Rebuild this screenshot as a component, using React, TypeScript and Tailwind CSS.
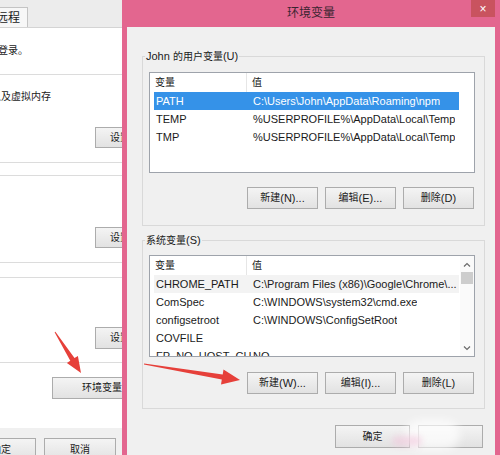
import React from "react";

const F = "font-['Liberation_Sans','Noto_Sans_CJK_SC',sans-serif]";

function Z({ children }: { children: React.ReactNode }) {
  return <span className="text-[10px]">{children}</span>;
}

function Btn({ children, className = "" }: { children?: React.ReactNode; className?: string }) {
  return (
    <div
      className={
        "flex items-center shrink-0 border border-[#acacac] bg-linear-to-b from-[#f4f4f4] to-[#e2e2e2] text-[#1a1a1a] whitespace-nowrap " +
        className
      }
    >
      {children}
    </div>
  );
}

type Row = { name: string; value: string; sel?: boolean; hover?: boolean };

function ListBox({ rows, scroll, className = "" }: { rows: Row[]; scroll?: boolean; className?: string }) {
  return (
    <div className={"bg-white border border-[#9ea3ab] flex overflow-hidden shrink-0 " + className}>
      <div className="flex-1 flex flex-col overflow-hidden">
        <div className="h-[19px] flex shrink-0 text-[#1a1a1a]">
          <div className="w-[97px] pl-[5px] border-r border-[#e6e6e6] flex items-center">
            <Z>变量</Z>
          </div>
          <div className="pl-[5px] flex items-center">
            <Z>值</Z>
          </div>
        </div>
        {rows.map((r, i) => (
          <div
            key={i}
            className={
              "ml-[4px] w-[305px] h-[18px] shrink-0 flex items-center whitespace-nowrap " +
              (r.sel ? "bg-[#3592e8] text-white" : r.hover ? "bg-[#f3f3f3] text-[#1a1a1a]" : "text-[#1a1a1a]")
            }
          >
            <div className="w-[97px] pl-[2px] overflow-hidden">{r.name}</div>
            <div className="pl-[2px] overflow-hidden">{r.value}</div>
          </div>
        ))}
      </div>
      {scroll && (
        <div className="w-[14px] bg-[#fafafa] flex flex-col shrink-0">
          <div className="h-[16px] flex items-center justify-center">
            <svg width="8" height="5" viewBox="0 0 8 5">
              <path d="M1 4.5 L4 1.5 L7 4.5" fill="none" stroke="#6a6a6a" strokeWidth="1.2" />
            </svg>
          </div>
          <div className="h-[12px] mx-[1px] bg-[#cdcdcd]" />
          <div className="flex-1" />
          <div className="h-[16px] flex items-center justify-center">
            <svg width="8" height="5" viewBox="0 0 8 5">
              <path d="M1 0.5 L4 3.5 L7 0.5" fill="none" stroke="#6a6a6a" strokeWidth="1.2" />
            </svg>
          </div>
        </div>
      )}
    </div>
  );
}

function arrowPts(x1: number, y1: number, x2: number, y2: number, hl: number, hw: number, sw: number, tw: number) {
  const dx = x2 - x1;
  const dy = y2 - y1;
  const L = Math.hypot(dx, dy);
  const ux = dx / L;
  const uy = dy / L;
  const nx = -uy;
  const ny = ux;
  const bx = x2 - ux * hl;
  const by = y2 - uy * hl;
  const pts = [
    [x1 + (nx * tw) / 2, y1 + (ny * tw) / 2],
    [bx + (nx * sw) / 2, by + (ny * sw) / 2],
    [bx + (nx * hw) / 2, by + (ny * hw) / 2],
    [x2, y2],
    [bx - (nx * hw) / 2, by - (ny * hw) / 2],
    [bx - (nx * sw) / 2, by - (ny * sw) / 2],
    [x1 - (nx * tw) / 2, y1 - (ny * tw) / 2],
  ];
  return pts.map((p) => p[0].toFixed(1) + "," + p[1].toFixed(1)).join(" ");
}

export default function App() {
  const userRows: Row[] = [
    { name: "PATH", value: "C:\\Users\\John\\AppData\\Roaming\\npm", sel: true },
    { name: "TEMP", value: "%USERPROFILE%\\AppData\\Local\\Temp" },
    { name: "TMP", value: "%USERPROFILE%\\AppData\\Local\\Temp" },
  ];
  const sysRows: Row[] = [
    { name: "CHROME_PATH", value: "C:\\Program Files (x86)\\Google\\Chrome\\...", hover: true },
    { name: "ComSpec", value: "C:\\WINDOWS\\system32\\cmd.exe" },
    { name: "configsetroot", value: "C:\\WINDOWS\\ConfigSetRoot" },
    { name: "COVFILE", value: "" },
    { name: "FP_NO_HOST_CH", value: "NO" },
  ];

  return (
    <div className={"w-[500px] h-[455px] relative overflow-hidden flex bg-[#f0f0f0] text-[11px] leading-[14px] " + F}>
      {/* Background window: System Properties */}
      <div className="w-[122px] shrink-0 flex flex-col overflow-hidden text-[#1a1a1a]">
        <div className="h-[27px] bg-[#ececec] flex items-end shrink-0">
          <div className="ml-[-10px] w-[38px] h-[20px] border border-b-0 border-[#c4c4c4] bg-[#f7f7f7] flex items-center pl-[5px] whitespace-nowrap">
            <span className="text-[12px]">远程</span>
          </div>
        </div>
        <div className="h-[401px] shrink-0 bg-white border-t border-[#d4d4d4] flex flex-col whitespace-nowrap">
          <div className="mt-[15px] h-[14px] ml-[-2px]">
            <Z>登录。</Z>
          </div>
          <div className="mt-[17px] h-[89px] shrink-0 border-y border-[#dcdcdc] flex flex-col">
            <div className="mt-[14px] h-[14px] ml-[-9px]">
              <Z>以及虚拟内存</Z>
            </div>
            <Btn className="mt-[24px] ml-[95px] w-[80px] h-[21px] pl-[14px]">
              <Z>设置(S)...</Z>
            </Btn>
          </div>
          <div className="mt-[12px] h-[88px] shrink-0 border-y border-[#dcdcdc] flex flex-col">
            <Btn className="mt-[51px] ml-[95px] w-[80px] h-[21px] pl-[14px]">
              <Z>设置(E)...</Z>
            </Btn>
          </div>
          <div className="mt-[14px] h-[86px] shrink-0 border-y border-[#dcdcdc] flex flex-col">
            <Btn className="mt-[49px] ml-[95px] w-[80px] h-[22px] pl-[14px]">
              <Z>设置(T)...</Z>
            </Btn>
          </div>
          <Btn className="mt-[14px] ml-[52px] w-[110px] h-[22px] pl-[29px]">
            <Z>环境变量(N)...</Z>
          </Btn>
        </div>
        <div className="flex-1 flex items-start pt-[10px] gap-[8px]">
          <Btn className="ml-[-34px] w-[70px] h-[23px] justify-center">
            <Z>确定</Z>
          </Btn>
          <Btn className="w-[72px] h-[23px] justify-center">
            <Z>取消</Z>
          </Btn>
        </div>
      </div>

      {/* Environment variables dialog */}
      <div className="flex-1 flex flex-col bg-[#e3668f]">
        <div className="h-[27px] grid grid-cols-[1fr_auto_1fr] items-start shrink-0">
          <div />
          <div className="pt-[6px] text-[12px] text-[#3a2430]">环境变量</div>
          <div className="flex justify-end pr-[5px]">
            <div className="w-[24px] h-[17px] bg-[#c9535f] flex items-center justify-center text-white text-[12px] leading-none">
              ×
            </div>
          </div>
        </div>
        <div className="mx-[5px] flex-1 bg-[#f0f0f0] flex flex-col text-[#1a1a1a]">
          <fieldset className="mt-[22px] ml-[15px] mr-[10px] border border-[#d9d9d9] pt-[8px] pb-[16px] flex flex-col">
            <legend className="ml-[2px] px-[1px] leading-[14px]">
              John <Z>的用户变量</Z>(U)
            </legend>
            <ListBox rows={userRows} className="ml-[6px] w-[326px] h-[101px]" />
            <div className="mt-[14px] pr-[10px] flex justify-end gap-[7px]">
              <Btn className="w-[71px] h-[22px] justify-center">
                <Z>新建</Z>(N)...
              </Btn>
              <Btn className="w-[71px] h-[22px] justify-center">
                <Z>编辑</Z>(E)...
              </Btn>
              <Btn className="w-[71px] h-[22px] justify-center">
                <Z>删除</Z>(D)
              </Btn>
            </div>
          </fieldset>
          <fieldset className="mt-[7px] ml-[15px] mr-[10px] border border-[#d9d9d9] pt-[7px] pb-[14px] flex flex-col">
            <legend className="ml-[2px] px-[1px] leading-[14px]">
              <Z>系统变量</Z>(S)
            </legend>
            <ListBox rows={sysRows} scroll className="ml-[6px] w-[326px] h-[102px]" />
            <div className="mt-[15px] pr-[10px] flex justify-end gap-[7px]">
              <Btn className="w-[71px] h-[22px] justify-center">
                <Z>新建</Z>(W)...
              </Btn>
              <Btn className="w-[71px] h-[22px] justify-center">
                <Z>编辑</Z>(I)...
              </Btn>
              <Btn className="w-[71px] h-[22px] justify-center">
                <Z>删除</Z>(L)
              </Btn>
            </div>
          </fieldset>
          <div className="mt-[16px] pr-[12px] flex justify-end gap-[8px]">
            <Btn className="w-[75px] h-[23px] justify-center border-[#7f9cc4]">
              <Z>确定</Z>
            </Btn>
            <Btn className="w-[65px] h-[23px] justify-center" />
          </div>
        </div>
      </div>

      {/* watermark smudge */}
      <div className="absolute left-[405px] top-[420px] w-[55px] h-[30px] rounded-full bg-white/70 blur-[4px]" />
      <div className="absolute left-[392px] top-[436px] w-[30px] h-[10px] rounded-full bg-[#f2c6dc]/60 blur-[3px]" />

      {/* red annotation arrows */}
      <svg className="absolute left-0 top-0 pointer-events-none" width="500" height="455" viewBox="0 0 500 455">
        <polygon points={arrowPts(55, 332, 81, 373, 16, 13, 5, 1)} fill="#e6403a" />
        <polygon points={arrowPts(144, 364, 240, 380, 18, 15, 5, 1)} fill="#e6403a" />
      </svg>
    </div>
  );
}
